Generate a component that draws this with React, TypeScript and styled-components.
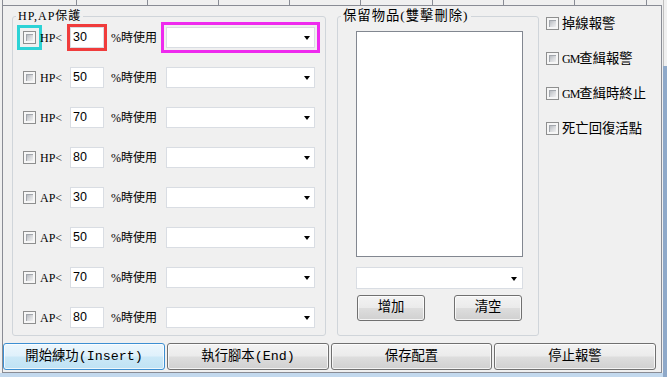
import React from "react";
import styled, { createGlobalStyle } from "styled-components";

const GlobalStyle = createGlobalStyle`
  html, body { margin: 0; padding: 0; background: #f0f0f0; }
  body {
    width: 667px; height: 377px; overflow: hidden;
    font-family: "Liberation Serif", "Noto Sans CJK TC", serif;
    color: #000;
  }
  * { box-sizing: border-box; }
`;

const Window = styled.div`
  width: 667px;
  height: 377px;
  display: grid;
  grid-template-columns: 663px 4px;
  grid-template-rows: 373px 4px;
  background: #f0f0f0;
`;

const Panel = styled.div`
  grid-column: 1;
  grid-row: 1;
  display: flex;
  flex-direction: column;
  padding-left: 2px;
`;

const TabStrip = styled.div`
  height: 5px;
  display: flex;
  border-left: 1px solid #898c95;
`;

const TabEdge = styled.div<{ $w: number }>`
  flex: 0 0 ${(p) => p.$w}px;
  border-right: 1px solid #898c95;
`;

const TabPage = styled.div`
  flex: 1;
  margin-right: 1px;
  border: 1px solid #898c95;
  display: flex;
  flex-direction: column;
  padding: 3px 0 1px 0;
`;

const FrameSide = styled.div`
  grid-column: 2;
  grid-row: 1 / span 2;
  display: flex;
  flex-direction: column;
`;

const FrameSideTop = styled.div`
  height: 66px;
  border-left: 1px solid #c0c0c0;
  background: #f0f0f0;
`;

const FrameSideRest = styled.div`
  flex: 1;
  background: #8fa9c9;
`;

const FrameBottom = styled.div`
  grid-column: 1;
  grid-row: 2;
  background: #c3d9ee;
`;

const TopArea = styled.div`
  height: 327px;
  display: flex;
  align-items: stretch;
  padding-left: 9px;
`;

const Group = styled.fieldset<{ $w: number }>`
  margin: 0;
  padding: 0;
  min-width: 0;
  width: ${(p) => p.$w}px;
  border: 1px solid #d0d5da;
  border-radius: 3px;
`;

const Legend = styled.legend<{ $size: number }>`
  margin-left: 3px;
  padding: 0 2px;
  font-family: "Liberation Serif", "Noto Sans CJK TC", serif;
  font-size: ${(p) => p.$size}px;
  line-height: 14px;
  letter-spacing: 1px;
`;

const RowList = styled.div`
  display: flex;
  flex-direction: column;
  gap: 19px;
  padding: 4px 0 7px 10px;
`;

const Row = styled.div`
  display: grid;
  grid-template-columns: 13px 34px 34px 62px 149px;
  align-items: center;
  height: 21px;
`;

const Check = styled.span<{ $mark?: string }>`
  display: inline-flex;
  width: 13px;
  height: 13px;
  padding: 2px;
  border: 1px solid #8e8f8f;
  background: #f6f6f6;
  ${(p) => (p.$mark ? `outline: 3px solid ${p.$mark}; outline-offset: 3px;` : "")}
  &::after {
    content: "";
    flex: 1;
    background: linear-gradient(135deg, #aeb2b8 0%, #d6d8db 55%, #f0f0f1 100%);
    box-shadow: inset 1px 1px 0 #a3a7ad;
  }
`;

const RowLabel = styled.span`
  padding-left: 4px;
  font-size: 12px;
  line-height: 14px;
  white-space: nowrap;
`;

const UseLabel = styled.span`
  padding-left: 7px;
  font-size: 12px;
  line-height: 14px;
  white-space: nowrap;
`;

const TextBox = styled.div<{ $mark?: string }>`
  height: 21px;
  border: 1px solid #d9dde3;
  background: #fff;
  padding-left: 2px;
  font-family: "Liberation Sans", sans-serif;
  font-size: 12.5px;
  line-height: 19px;
  ${(p) => (p.$mark ? `outline: 3px solid ${p.$mark}; outline-offset: 0px;` : "")}
`;

const Combo = styled.div<{ $mark?: string; $h?: number; $pr?: number }>`
  height: ${(p) => p.$h ?? 21}px;
  border: 1px solid #d9dde3;
  background: #fff;
  display: flex;
  align-items: center;
  justify-content: flex-end;
  padding-right: ${(p) => p.$pr ?? 4}px;
  ${(p) => (p.$mark ? `outline: 3px solid ${p.$mark}; outline-offset: 2px;` : "")}
`;

const Arrow = styled.span`
  width: 0;
  height: 0;
  border-left: 3.5px solid transparent;
  border-right: 3.5px solid transparent;
  border-top: 4px solid #000;
  margin-top: 1px;
`;

const ItemColumn = styled.div`
  display: flex;
  flex-direction: column;
  padding: 8px 15px 13px 18px;
`;

const ListBox = styled.div`
  height: 226px;
  border: 1px solid #828790;
  background: #fff;
`;

const ComboSpacer = styled.div`
  margin-top: 10px;
`;

const ButtonPair = styled.div`
  margin-top: 6px;
  display: flex;
  justify-content: space-between;
  padding: 0 1px;
`;

const WinButton = styled.button<{ $focus?: boolean; $w?: number; $h: number }>`
  margin: 0;
  padding: 0;
  ${(p) => (p.$w ? `width: ${p.$w}px;` : "")}
  height: ${(p) => p.$h}px;
  border: 1px solid ${(p) => (p.$focus ? "#3c8fd2" : "#707070")};
  border-radius: 3px;
  background: ${(p) =>
    p.$focus
      ? "linear-gradient(#ecf7fd 0%, #dff1fb 48%, #cbe8f7 52%, #bfe2f4 100%)"
      : "linear-gradient(#f3f3f3 0%, #ebebeb 48%, #dddddd 52%, #d0d0d0 100%)"};
  box-shadow: inset 0 0 0 1px rgba(255, 255, 255, 0.75);
  font-family: "Liberation Mono", "Noto Sans CJK TC", monospace;
  font-size: 13.33px;
  line-height: 16px;
  color: #000;
  white-space: nowrap;
`;

const SideColumn = styled.div`
  margin-left: 7px;
  padding-top: 7px;
  display: flex;
  flex-direction: column;
  gap: 21px;
`;

const SideItem = styled.div`
  display: flex;
  align-items: center;
  gap: 3px;
  height: 14px;
  font-family: "Noto Sans CJK TC", sans-serif;
  font-size: 13.33px;
  line-height: 14px;
  white-space: nowrap;
`;

const Latin = styled.span`
  font-family: "Liberation Serif", serif;
  font-size: 12px;
  letter-spacing: -1px;
`;

const ButtonBar = styled.div`
  margin-top: 7px;
  display: grid;
  grid-template-columns: 162px 162px 161px 162px;
  column-gap: 2px;
`;

type Rule = { kind: string; value: string };

const rules: Rule[] = [
  { kind: "HP<", value: "30" },
  { kind: "HP<", value: "50" },
  { kind: "HP<", value: "70" },
  { kind: "HP<", value: "80" },
  { kind: "AP<", value: "30" },
  { kind: "AP<", value: "50" },
  { kind: "AP<", value: "70" },
  { kind: "AP<", value: "80" },
];

const tabWidths = [74, 71, 71, 71, 71, 72, 71, 71, 72];

export default function App() {
  return (
    <>
      <GlobalStyle />
      <Window>
        <Panel>
          <TabStrip>
            {tabWidths.map((w, i) => (
              <TabEdge key={i} $w={w} />
            ))}
          </TabStrip>
          <TabPage>
            <TopArea>
              <Group $w={314}>
                <Legend $size={12}>HP,AP保護</Legend>
                <RowList>
                  {rules.map((r, i) => (
                    <Row key={i}>
                      <Check $mark={i === 0 ? "#2dd3d6" : undefined} />
                      <RowLabel>{r.kind}</RowLabel>
                      <TextBox $mark={i === 0 ? "#f03c3c" : undefined}>{r.value}</TextBox>
                      <UseLabel>%時使用</UseLabel>
                      <Combo $mark={i === 0 ? "#ee2aee" : undefined}>
                        <Arrow />
                      </Combo>
                    </Row>
                  ))}
                </RowList>
              </Group>
              <Group $w={202} style={{ marginLeft: 11 }}>
                <Legend $size={13.33}>保留物品(雙擊刪除)</Legend>
                <ItemColumn>
                  <ListBox />
                  <ComboSpacer>
                    <Combo $h={22} $pr={5}>
                      <Arrow />
                    </Combo>
                  </ComboSpacer>
                  <ButtonPair>
                    <WinButton $w={68} $h={26}>增加</WinButton>
                    <WinButton $w={68} $h={26}>清空</WinButton>
                  </ButtonPair>
                </ItemColumn>
              </Group>
              <SideColumn>
                <SideItem>
                  <Check />
                  <span>掉線報警</span>
                </SideItem>
                <SideItem>
                  <Check />
                  <span>
                    <Latin>GM</Latin>查緝報警
                  </span>
                </SideItem>
                <SideItem>
                  <Check />
                  <span>
                    <Latin>GM</Latin>查緝時終止
                  </span>
                </SideItem>
                <SideItem>
                  <Check />
                  <span>死亡回復活點</span>
                </SideItem>
              </SideColumn>
            </TopArea>
            <ButtonBar>
              <WinButton $focus $h={27}>開始練功(Insert)</WinButton>
              <WinButton $h={27}>執行腳本(End)</WinButton>
              <WinButton $h={27}>保存配置</WinButton>
              <WinButton $h={27}>停止報警</WinButton>
            </ButtonBar>
          </TabPage>
        </Panel>
        <FrameSide>
          <FrameSideTop />
          <FrameSideRest />
        </FrameSide>
        <FrameBottom />
      </Window>
    </>
  );
}
